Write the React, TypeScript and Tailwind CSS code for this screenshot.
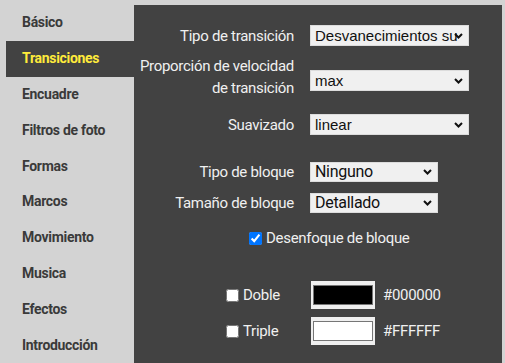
import React from "react";

const tabs = [
  "Básico",
  "Transiciones",
  "Encuadre",
  "Filtros de foto",
  "Formas",
  "Marcos",
  "Movimiento",
  "Musica",
  "Efectos",
  "Introducción",
];

const Chevron = () => (
  <svg
    width="9"
    height="6"
    viewBox="0 0 9 6"
    className="absolute right-[5px] top-1/2 -translate-y-1/2 pointer-events-none"
  >
    <path d="M1 1l3.5 3.5L8 1" fill="none" stroke="#111" strokeWidth="2" />
  </svg>
);

const Select = ({
  value,
  width,
  height = "h-[21px]",
  font = "font-['Liberation_Sans',sans-serif] text-[15px] tracking-normal",
}: {
  value: string;
  width: string;
  height?: string;
  font?: string;
}) => (
  <div className={`relative ${width} ${height} bg-[#f0f0f0] border border-[#dcdcdc]`}>
    <div
      className={`h-full flex items-center pl-[4px] pr-[16px] whitespace-nowrap text-[#111] ${font}`}
    >
      {value}
    </div>
    <Chevron />
  </div>
);

const Swatch = ({ color }: { color: string }) => (
  <div className="w-[64px] h-[28px] bg-[#efefef] px-[2px] py-[4px]">
    <div className="w-full h-full border border-[#767676]" style={{ background: color }} />
  </div>
);

export default function App() {
  const active = 1;
  return (
    <div className="w-[505px] h-[363px] bg-[#d3d3d3] flex overflow-hidden">
      <nav className="w-[128px] ml-[6px] pt-[5px] flex flex-col shrink-0 font-['Roboto',sans-serif] font-bold text-[14px] tracking-[-0.3px]">
        {tabs.map((t, i) => (
          <div
            key={t}
            className={`h-[36px] flex items-center pl-[16px] ${
              i === active ? "bg-[#424242] text-[#ffeb3b]" : "text-[#3a3a3a]"
            }`}
          >
            {t}
          </div>
        ))}
      </nav>

      <main className="mt-[5px] w-[368px] shrink-0 bg-[#424242] text-[#f0f0f0] font-['Roboto',sans-serif] text-[15px] leading-[20px] tracking-[-0.3px] flex flex-col">
        <div className="flex items-center h-[21px] mt-[20px]">
          <div className="w-[160px] text-right">Tipo de transición</div>
          <div className="ml-[16px]">
            <Select value="Desvanecimientos su" width="w-[159px]" />
          </div>
        </div>

        <div className="flex items-start h-[44px] mt-[9px]">
          <div className="w-[160px] text-right leading-[22px]">
            Proporción de velocidad
            <br />
            de transición
          </div>
          <div className="ml-[16px] mt-[15px]">
            <Select value="max" width="w-[159px]" />
          </div>
        </div>

        <div className="flex items-center h-[21px] mt-[15px]">
          <div className="w-[160px] text-right">Suavizado</div>
          <div className="ml-[16px]">
            <Select value="linear" width="w-[159px]" />
          </div>
        </div>

        <div className="flex items-center h-[20px] mt-[27px]">
          <div className="w-[160px] text-right">Tipo de bloque</div>
          <div className="ml-[16px]">
            <Select
              value="Ninguno"
              width="w-[128px]"
              height="h-[20px]"
              font="font-['Roboto',sans-serif] text-[16px]"
            />
          </div>
        </div>

        <div className="flex items-center h-[20px] mt-[11px]">
          <div className="w-[160px] text-right">Tamaño de bloque</div>
          <div className="ml-[16px]">
            <Select
              value="Detallado"
              width="w-[128px]"
              height="h-[20px]"
              font="font-['Roboto',sans-serif] text-[16px]"
            />
          </div>
        </div>

        <label className="flex items-center h-[20px] mt-[15px] ml-[115px]">
          <input type="checkbox" defaultChecked className="w-[13px] h-[13px] m-0 accent-[#0075ff]" />
          <span className="ml-[4px]">Desenfoque de bloque</span>
        </label>

        <div className="flex items-center h-[28px] mt-[33px]">
          <label className="w-[85px] ml-[92px] flex items-center">
            <input type="checkbox" className="w-[13px] h-[13px] m-0" />
            <span className="ml-[4px]">Doble</span>
          </label>
          <Swatch color="#000000" />
          <span className="ml-[8px]">#000000</span>
        </div>

        <div className="flex items-center h-[28px] mt-[8px]">
          <label className="w-[85px] ml-[92px] flex items-center">
            <input type="checkbox" className="w-[13px] h-[13px] m-0" />
            <span className="ml-[4px]">Triple</span>
          </label>
          <Swatch color="#ffffff" />
          <span className="ml-[8px]">#FFFFFF</span>
        </div>
      </main>
    </div>
  );
}
